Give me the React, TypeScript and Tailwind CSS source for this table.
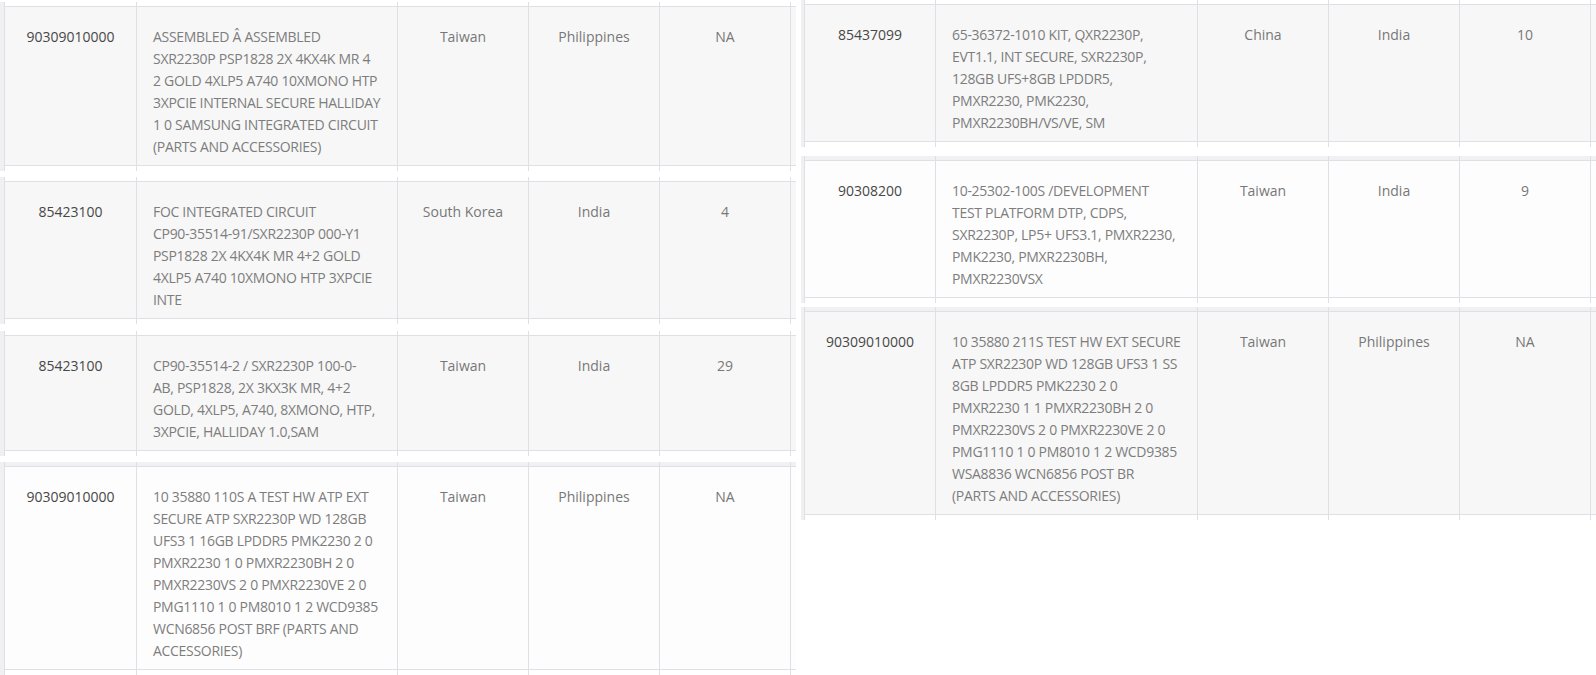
import React from "react";

type Row = {
  code: string;
  desc: string[];
  origin: string;
  dest: string;
  qty: string;
  gray: boolean;
  band: boolean;
  mt: string;
};

const LINE = "border-[#dfe0e6]";

function Cell({
  w,
  right,
  gray,
  band,
  children,
  inner,
}: {
  w: string;
  right?: boolean;
  gray: boolean;
  band: boolean;
  children?: React.ReactNode;
  inner?: string;
}) {
  return (
    <div
      className={`${w} shrink-0 flex flex-col border-l ${right ? "border-r" : ""} ${LINE}`}
    >
      <div className={`h-[4px] ${band ? "bg-[#f1f1f3]" : "bg-white"}`} />
      <div
        className={`flex-1 border-y ${LINE} ${gray ? "bg-[#f7f7f7]" : "bg-[#fdfdfd]"} pt-[19px] pb-[7px] ${inner ?? ""}`}
      >
        {children}
      </div>
      <div className="h-[5px]" />
    </div>
  );
}

function Block({ row, left }: { row: Row; left: boolean }) {
  return (
    <div
      className={`flex ${row.mt} ${left ? "border-l-4" : "border-l-[3px]"} border-l-[#f0f0f2]`}
    >
      <Cell w={left ? "w-[132px]" : "w-[131px]"} gray={row.gray} band={row.band} inner="text-center text-[#474747]">
        {row.code}
      </Cell>
      <Cell w={left ? "w-[261px]" : "w-[262px]"} gray={row.gray} band={row.band} inner="pl-4 text-[#7d7d7d] whitespace-nowrap tracking-[-0.3px]">
        {row.desc.map((l, i) => (
          <div key={i}>{l}</div>
        ))}
      </Cell>
      <Cell w="w-[131px]" gray={row.gray} band={row.band} inner="text-center text-[#777777]">
        {row.origin}
      </Cell>
      <Cell w="w-[131px]" gray={row.gray} band={row.band} inner="text-center text-[#777777]">
        {row.dest}
      </Cell>
      <Cell w="w-[132px]" right gray={row.gray} band={row.band} inner="text-center text-[#777777]">
        {row.qty}
      </Cell>
      <div className="w-[5px] shrink-0 flex flex-col">
        <div className={`h-[4px] ${row.band ? "bg-[#f1f1f3]" : "bg-white"}`} />
        <div className={`flex-1 border-y ${LINE} ${row.gray ? "bg-[#f7f7f7]" : "bg-[#fdfdfd]"}`} />
        <div className="h-[5px]" />
      </div>
    </div>
  );
}

const leftRows: Row[] = [
  {
    code: "90309010000",
    desc: [
      "ASSEMBLED Â ASSEMBLED",
      "SXR2230P PSP1828 2X 4KX4K MR 4",
      "2 GOLD 4XLP5 A740 10XMONO HTP",
      "3XPCIE INTERNAL SECURE HALLIDAY",
      "1 0 SAMSUNG INTEGRATED CIRCUIT",
      "(PARTS AND ACCESSORIES)",
    ],
    origin: "Taiwan",
    dest: "Philippines",
    qty: "NA",
    gray: true,
    band: false,
    mt: "mt-[2px]",
  },
  {
    code: "85423100",
    desc: [
      "FOC INTEGRATED CIRCUIT",
      "CP90-35514-91/SXR2230P 000-Y1",
      "PSP1828 2X 4KX4K MR 4+2 GOLD",
      "4XLP5 A740 10XMONO HTP 3XPCIE",
      "INTE",
    ],
    origin: "South Korea",
    dest: "India",
    qty: "4",
    gray: true,
    band: false,
    mt: "mt-[6px]",
  },
  {
    code: "85423100",
    desc: [
      "CP90-35514-2 / SXR2230P 100-0-",
      "AB, PSP1828, 2X 3KX3K MR, 4+2",
      "GOLD, 4XLP5, A740, 8XMONO, HTP,",
      "3XPCIE, HALLIDAY 1.0,SAM",
    ],
    origin: "Taiwan",
    dest: "India",
    qty: "29",
    gray: true,
    band: false,
    mt: "mt-[7px]",
  },
  {
    code: "90309010000",
    desc: [
      "10 35880 110S A TEST HW ATP EXT",
      "SECURE ATP SXR2230P WD 128GB",
      "UFS3 1 16GB LPDDR5 PMK2230 2 0",
      "PMXR2230 1 0 PMXR2230BH 2 0",
      "PMXR2230VS 2 0 PMXR2230VE 2 0",
      "PMG1110 1 0 PM8010 1 2 WCD9385",
      "WCN6856 POST BRF (PARTS AND",
      "ACCESSORIES)",
    ],
    origin: "Taiwan",
    dest: "Philippines",
    qty: "NA",
    gray: false,
    band: true,
    mt: "mt-[6px]",
  },
];

const rightRows: Row[] = [
  {
    code: "85437099",
    desc: [
      "65-36372-1010 KIT, QXR2230P,",
      "EVT1.1, INT SECURE, SXR2230P,",
      "128GB UFS+8GB LPDDR5,",
      "PMXR2230, PMK2230,",
      "PMXR2230BH/VS/VE, SM",
    ],
    origin: "China",
    dest: "India",
    qty: "10",
    gray: true,
    band: false,
    mt: "mt-0",
  },
  {
    code: "90308200",
    desc: [
      "10-25302-100S /DEVELOPMENT",
      "TEST PLATFORM DTP, CDPS,",
      "SXR2230P, LP5+ UFS3.1, PMXR2230,",
      "PMK2230, PMXR2230BH,",
      "PMXR2230VSX",
    ],
    origin: "Taiwan",
    dest: "India",
    qty: "9",
    gray: false,
    band: true,
    mt: "mt-[9px]",
  },
  {
    code: "90309010000",
    desc: [
      "10 35880 211S TEST HW EXT SECURE",
      "ATP SXR2230P WD 128GB UFS3 1 SS",
      "8GB LPDDR5 PMK2230 2 0",
      "PMXR2230 1 1 PMXR2230BH 2 0",
      "PMXR2230VS 2 0 PMXR2230VE 2 0",
      "PMG1110 1 0 PM8010 1 2 WCD9385",
      "WSA8836 WCN6856 POST BR",
      "(PARTS AND ACCESSORIES)",
    ],
    origin: "Taiwan",
    dest: "Philippines",
    qty: "NA",
    gray: true,
    band: true,
    mt: "mt-[4px]",
  },
];

export default function App() {
  return (
    <div
      className="w-[1596px] h-[675px] overflow-hidden bg-white flex items-start gap-[5px] text-[14px] leading-[22px]"
      style={{ fontFamily: "'Open Sans', 'Noto Sans', sans-serif" }}
    >
      <div className="w-[796px] shrink-0 flex flex-col">
        {leftRows.map((r, i) => (
          <Block key={i} row={r} left />
        ))}
      </div>
      <div className="w-[795px] shrink-0 flex flex-col">
        {rightRows.map((r, i) => (
          <Block key={i} row={r} left={false} />
        ))}
      </div>
    </div>
  );
}
